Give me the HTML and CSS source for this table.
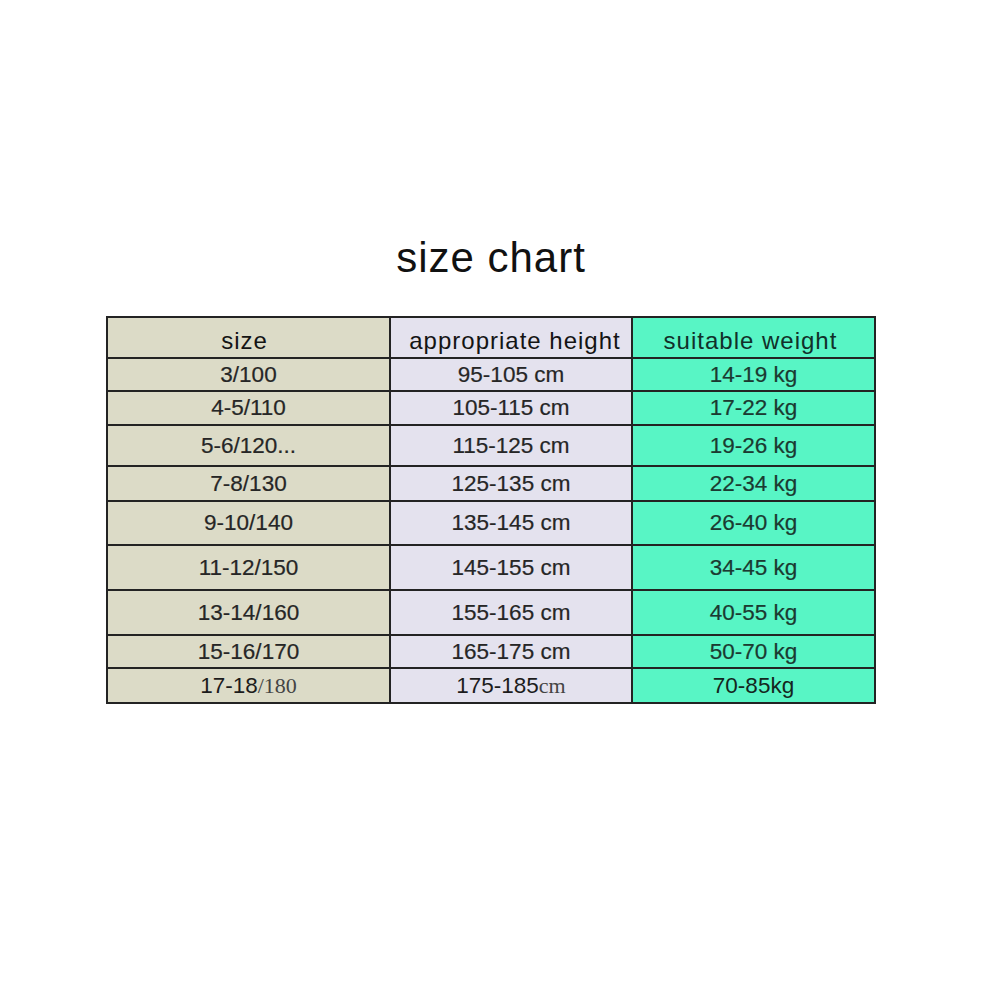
FILE: index.html
```html
<!DOCTYPE html>
<html lang="en">
<head>
<meta charset="utf-8">
<title>size chart</title>
<link rel="stylesheet" href="styles.css">
</head>
<body>
<main class="page">
  <h1 class="title">size chart</h1>
  <table class="chart">
    <colgroup>
      <col class="c-size">
      <col class="c-height">
      <col class="c-weight">
    </colgroup>
    <thead>
      <tr class="r-head">
        <th class="size head-s">size</th>
        <th class="height head-h">appropriate height</th>
        <th class="weight head-w">suitable weight</th>
      </tr>
    </thead>
    <tbody>
      <tr class="r1"><td class="size">3/100</td><td class="height">95-105 cm</td><td class="weight">14-19 kg</td></tr>
      <tr class="r2"><td class="size">4-5/110</td><td class="height">105-115 cm</td><td class="weight">17-22 kg</td></tr>
      <tr class="r3"><td class="size">5-6/120...</td><td class="height">115-125 cm</td><td class="weight">19-26 kg</td></tr>
      <tr class="r4"><td class="size">7-8/130</td><td class="height">125-135 cm</td><td class="weight">22-34 kg</td></tr>
      <tr class="r5"><td class="size">9-10/140</td><td class="height">135-145 cm</td><td class="weight">26-40 kg</td></tr>
      <tr class="r6"><td class="size">11-12/150</td><td class="height">145-155 cm</td><td class="weight">34-45 kg</td></tr>
      <tr class="r7"><td class="size">13-14/160</td><td class="height">155-165 cm</td><td class="weight">40-55 kg</td></tr>
      <tr class="r8"><td class="size">15-16/170</td><td class="height">165-175 cm</td><td class="weight">50-70 kg</td></tr>
      <tr class="r9 last"><td class="size">17-18<span class="serif">/180</span></td><td class="height">175-185<span class="serif">cm</span></td><td class="weight">70-85kg</td></tr>
    </tbody>
  </table>
</main>
</body>
</html>
```
FILE: styles.css
```css
html, body {
  margin: 0;
  padding: 0;
  background: #ffffff;
}

body {
  font-family: "Liberation Sans", Arial, sans-serif;
  color: #262626;
}

.page {
  width: 770px;
  margin-left: 106px;
  padding-top: 234px;
}

.title {
  margin: 0 0 34px 0;
  font-size: 42px;
  font-weight: normal;
  line-height: 48px;
  letter-spacing: 1px;
  text-align: center;
  color: #111111;
}

.chart {
  width: 770px;
  table-layout: fixed;
  border-collapse: separate;
  border-spacing: 2px;
  background: #232323;
}

.c-size { width: 281px; }
.c-height { width: 240px; }
.c-weight { width: 241px; }

.chart th,
.chart td {
  padding: 0;
  text-align: center;
  vertical-align: middle;
  font-size: 22.5px;
  font-weight: normal;
  line-height: 24px;
  white-space: nowrap;
  -webkit-text-stroke: 0.2px currentColor;
}

.chart th {
  font-size: 24px;
  letter-spacing: 1px;
  color: #141414;
  padding-top: 6px;
  -webkit-text-stroke: 0;
}

.size { background: #dcdbc7; }
.height { background: #e4e2ee; }
.weight { background: #58f5c5; color: #1b3a31; }

.chart th.weight { color: #11302a; }
.chart .head-s { padding-right: 8px; }
.chart .head-h { padding-left: 8px; }
.chart .head-w { padding-right: 6px; }

.r-head th { height: 33px; }
.r1 td { height: 31px; }
.r2 td { height: 32px; }
.r3 td { height: 39px; }
.r4 td { height: 33px; }
.r5 td { height: 42px; }
.r6 td { height: 43px; }
.r7 td { height: 43px; }
.r8 td { height: 31px; }
.r9 td { height: 33px; }

.last td { color: #1c1c1c; -webkit-text-stroke: 0; }
.last .weight { color: #142620; }

.serif {
  font-family: "Liberation Serif", "Times New Roman", serif;
  color: #444444;
  font-size: 22px;
}
```
